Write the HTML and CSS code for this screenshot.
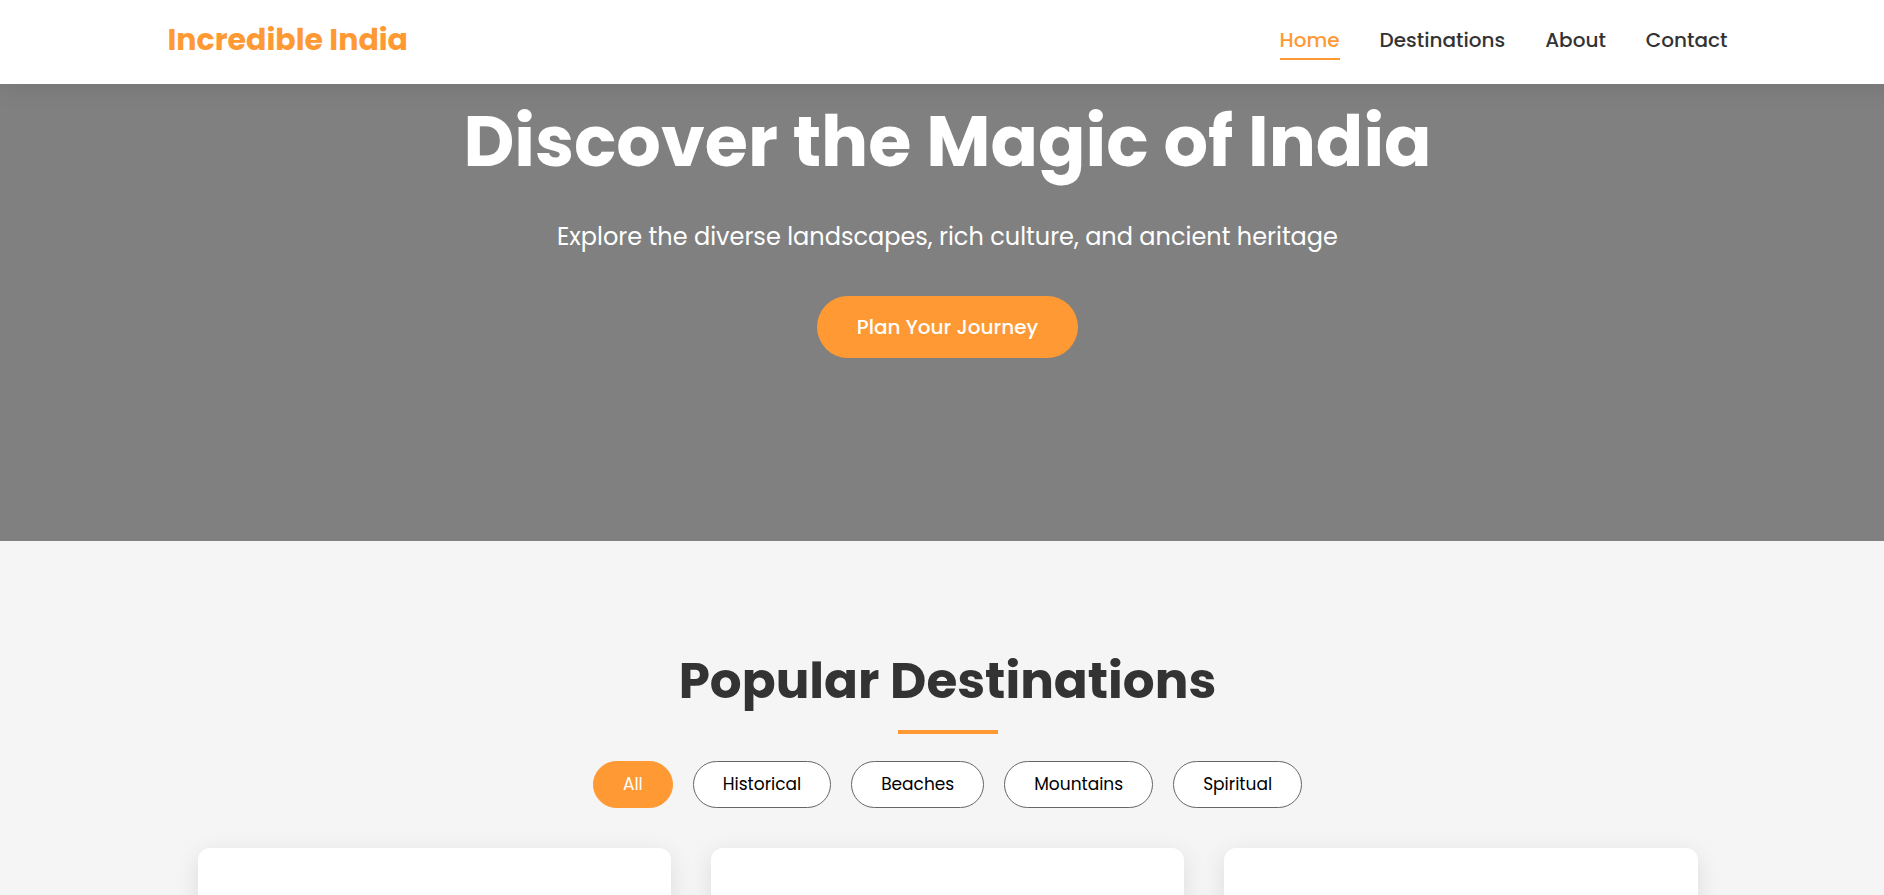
FILE: index.html
```html
<!DOCTYPE html>
<html lang="en">
<head>
<meta charset="utf-8">
<meta name="viewport" content="width=device-width, initial-scale=1">
<title>Incredible India</title>
<link rel="stylesheet" href="styles.css">
</head>
<body>
<div class="page">
  <header class="header">
    <nav class="nav">
      <a class="logo" href="#home">Incredible India</a>
      <ul class="nav-links">
        <li><a class="nav-link active" href="#home">Home</a></li>
        <li><a class="nav-link" href="#destinations">Destinations</a></li>
        <li><a class="nav-link" href="#about">About</a></li>
        <li><a class="nav-link" href="#contact">Contact</a></li>
      </ul>
    </nav>
  </header>
  <main>
    <section class="hero" id="home">
      <h1 class="hero-title">Discover the Magic of India</h1>
      <p class="hero-text">Explore the diverse landscapes, rich culture, and ancient heritage</p>
      <button class="cta" type="button">Plan Your Journey</button>
    </section>
    <section class="destinations" id="destinations">
      <h2 class="section-title">Popular Destinations</h2>
      <div class="filters">
        <button class="filter selected" type="button">All</button>
        <button class="filter" type="button">Historical</button>
        <button class="filter" type="button">Beaches</button>
        <button class="filter" type="button">Mountains</button>
        <button class="filter" type="button">Spiritual</button>
      </div>
      <div class="cards">
        <article class="card"></article>
        <article class="card"></article>
        <article class="card"></article>
      </div>
    </section>
  </main>
</div>
</body>
</html>
```
FILE: styles.css
```css
* {
  box-sizing: border-box;
  margin: 0;
  padding: 0;
}

html,
body {
  height: 100%;
  overflow: hidden;
}

body {
  font-family: Poppins, Inter, "Open Sans", sans-serif;
  color: #333;
  background: #f5f5f5;
}

.page {
  margin-right: -11px;
}

.header {
  position: relative;
  z-index: 1;
  background: #fff;
  box-shadow: 0 2px 25px rgba(0, 0, 0, 0.1);
}

.nav {
  display: flex;
  align-items: center;
  justify-content: space-between;
  max-width: 1560px;
  min-height: 84px;
  margin: 0 auto;
  padding-bottom: 4px;
}

.logo {
  font-size: 30px;
  font-weight: 700;
  color: #ff9933;
  text-decoration: none;
}

.nav-links {
  display: flex;
  gap: 40px;
  list-style: none;
}

.nav-link {
  display: block;
  padding: 6px 0 4px;
  border-bottom: 2px solid transparent;
  font-size: 20px;
  font-weight: 500;
  line-height: 28px;
  color: #333;
  text-decoration: none;
}

.nav-link.active {
  color: #ff9933;
  border-color: #ff9933;
}

.hero {
  display: flex;
  flex-direction: column;
  align-items: center;
  padding: 16px 20px 183px;
  color: #fff;
  text-align: center;
  background: #808080;
}

.hero-title {
  font-size: 70px;
  font-weight: 700;
  line-height: 84px;
}

.hero-text {
  margin: 33px 0 39px;
  font-size: 24px;
  line-height: 40px;
}

.cta {
  padding: 16px 40px;
  border: 0;
  border-radius: 31px;
  font: inherit;
  font-size: 20px;
  font-weight: 500;
  line-height: 30px;
  color: #fff;
  background: #ff9933;
}

.destinations {
  max-width: 1500px;
  margin: 0 auto;
  padding-top: 100px;
}

.section-title {
  display: flex;
  flex-direction: column;
  align-items: center;
  gap: 9px;
  font-size: 50px;
  font-weight: 700;
  line-height: 80px;
}

.section-title::after {
  content: "";
  width: 100px;
  height: 4px;
  background: #ff9933;
}

.filters {
  display: flex;
  justify-content: center;
  gap: 20px;
  margin: 27px 0 40px;
}

.filter {
  padding: 10px 29px;
  border: 1px solid #666;
  border-radius: 24px;
  font: inherit;
  font-size: 17px;
  line-height: 25px;
  color: #000;
  background: #fff;
}

.filter.selected {
  color: #fff;
  border-color: #ff9933;
  background: #ff9933;
}

.cards {
  display: grid;
  grid-template-columns: repeat(3, 1fr);
  gap: 40px;
}

.card {
  min-height: 500px;
  border-radius: 12px;
  background: #fff;
  box-shadow: 0 6px 25px rgba(0, 0, 0, 0.1);
}
```
